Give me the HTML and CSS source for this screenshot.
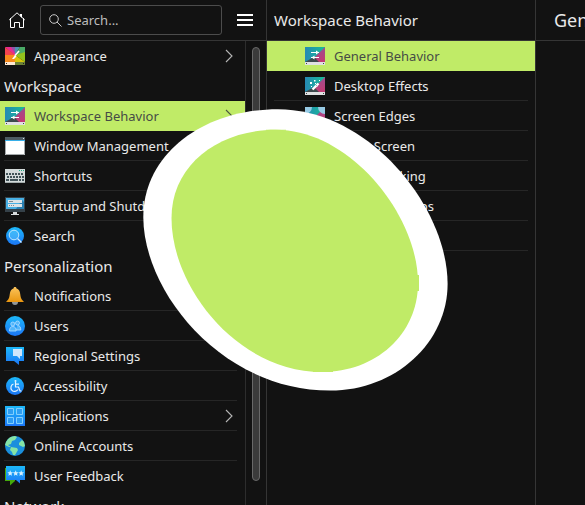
FILE: index.html
```html
<!DOCTYPE html>
<html lang="en">
<head>
<meta charset="utf-8">
<title>System Settings</title>
<link rel="stylesheet" href="styles.css">
</head>
<body>
<svg class="defs" width="0" height="0">
  <defs>
    <linearGradient id="blue" x1="0" y1="0" x2="0" y2="1"><stop offset="0" stop-color="#1cb8f9"/><stop offset="1" stop-color="#1c76f5"/></linearGradient>
    <linearGradient id="gold" x1="0" y1="0" x2="0" y2="1"><stop offset="0" stop-color="#fbc45c"/><stop offset="1" stop-color="#e99610"/></linearGradient>
    <linearGradient id="teal" x1="0" y1="0" x2="1" y2="0"><stop offset="0" stop-color="#2689b4"/><stop offset="1" stop-color="#18bd95"/></linearGradient>
    <linearGradient id="pink" x1="0" y1="0" x2="0" y2="1"><stop offset="0" stop-color="#9c4e91"/><stop offset="1" stop-color="#c43b72"/></linearGradient>
    <symbol id="desk" viewBox="0 0 20 18">
      <path fill="url(#teal)" d="M0 0h20v15H0z"/><path fill="url(#pink)" d="M20 0v15h-7L9 11z"/><path fill="#3d4a4d" d="M0 15l9-5 5 5z"/>
      <path fill="#dfe1e2" d="M0 15h20v3H0z"/><path fill="#444" d="M1 16h1v1H1zM18 16h1v1h-1z"/>
    </symbol>
    <symbol id="sliders" viewBox="0 0 20 18">
      <use href="#desk"/><path fill="none" stroke="#fff" stroke-width="1" d="M6 5.500h8M6 10.500h8"/><path fill="#fff" d="M11 3.500l3 2-3 2zM9.500 8.500l-3 2 3 2z"/>
    </symbol>
  </defs>
</svg>
<div class="window">
  <aside class="sidebar">
    <header class="bar tools">
      <svg class="home" width="16" height="16" viewBox="0 0 16 16"><path fill="none" stroke="#fff" d="M1.500 6v9.500h4V10.500h5v5h4V6M.2 8L8 .8 15.800 8"/><path fill="#fff" d="M6 10h4v1H6zM11 2h2v4l-2-2z"/></svg>
      <div class="search">
        <svg width="13" height="13" viewBox="0 0 13 13"><circle cx="5" cy="5" r="4.300" fill="none" stroke="#c8c8c8"/><path stroke="#c8c8c8" d="M8 8l4.500 4.500"/></svg>
        <span>Search...</span>
      </div>
      <div class="burger"><i></i><i></i><i></i></div>
    </header>
    <div class="body">
      <nav class="list">
        <div class="row"><svg class="icon" viewBox="0 0 20 18"><path fill="#e72a91" d="M0 0h10v9z"/><path fill="#f44350" d="M0 0v9l10-1z"/><path fill="#9152a6" d="M6 0h5v8z"/><path fill="#4f91b1" d="M10 0h5l-5 8z"/><path fill="#4aab67" d="M15 0h5v6L10 8z"/><path fill="#93c31d" d="M20 5v10L10 8z"/><path fill="#d6c609" d="M20 15H9l1-7z"/><path fill="#f88b1c" d="M0 8v7h10V8z"/><path fill="#fde7d2" d="M0 15h10v3H0z"/><path fill="#6b8136" d="M10 15h10v3H10z"/><path fill="#222" d="M1 16h1v1H1zM18 16h1v1h-1z"/><path stroke="#fff" stroke-width="1.600" d="M14 4l-4 4.500"/><path fill="#fff" d="M10 8l1.500 1.500L9 12H7z"/></svg><span>Appearance</span><svg class="chevron" viewBox="0 0 8 14"><path d="M1 1l6 6-6 6"/></svg></div>
        <h2>Workspace</h2>
        <div class="row selected"><svg class="icon"><use href="#sliders"/></svg><span>Workspace Behavior</span><svg class="chevron" viewBox="0 0 8 14"><path d="M1 1l6 6-6 6"/></svg></div>
        <div class="row line"><svg class="icon" viewBox="0 0 20 18"><path fill="#fff" d="M0 0h20v18H0z"/><path fill="#4d5b62" d="M0 0h20v3H0z"/><path fill="#36aee8" d="M0 3h20v1H0z"/><path fill="#dce1e4" d="M18 1h1v1h-1z"/><path fill="none" stroke="#a4a8aa" d="M.5 4v13.500h19V4"/></svg><span>Window Management</span></div>
        <div class="row line"><svg class="icon" viewBox="0 0 20 18"><path fill="#d3dada" d="M0 2h20v14H0z"/><path fill="#a4adad" d="M0 15h20v1H0z"/><path stroke="#415257" stroke-width="2" stroke-dasharray="2 1" d="M1 7h18M2 10h17"/><path stroke="#415257" stroke-width="2" d="M1 13h3M5 13h8M14 13h2M17 13h2"/><path stroke="#21a984" stroke-dasharray="1 1" d="M14 3.500h5"/></svg><span>Shortcuts</span></div>
        <div class="row line"><svg class="icon" viewBox="0 0 20 18"><path fill="#354149" d="M0 0h20v15H0z"/><path fill="#48b0e4" d="M1 1h18v11H1z"/><path fill="#2a7fb0" d="M17 3l2 2v7h-8z"/><path fill="#dce4e7" d="M3 3h14v3H3zM3 7h14v3H3z"/><path fill="#7b8a93" d="M4 4h4v1H4zM4 8h1v1H4zM6 8h1v1H6zM8 8h1v1H8z"/><path fill="#d8dcde" d="M8 15h4v2h2v1H6v-1h2z"/></svg><span>Startup and Shutdown</span></div>
        <div class="row"><svg class="icon" viewBox="0 0 20 18"><circle cx="10" cy="9" r="9" fill="url(#blue)"/><circle cx="9" cy="8" r="4.800" fill="#66c9fb" fill-opacity=".45" stroke="#bde7ff"/><path stroke="#d3eeff" stroke-width="1.200" d="M12.500 11.500l4 4"/></svg><span>Search</span></div>
        <h2>Personalization</h2>
        <div class="row line"><svg class="icon" viewBox="0 0 20 18"><circle cx="10" cy="15" r="3" fill="#92979a"/><path fill="url(#gold)" d="M10 0c1 0 1.500.6 1.500 1.500C15 2.500 15 6 15.500 9c.4 2.600 1.500 4 3.500 6H1c2-2 3.100-3.400 3.500-6C5 6 5 2.500 8.500 1.500 8.500.6 9 0 10 0z"/></svg><span>Notifications</span></div>
        <div class="row line"><svg class="icon big" viewBox="0 0 20 20"><circle cx="10" cy="10" r="10" fill="url(#blue)"/><g fill="#52b6fa" stroke="#b4deff" stroke-width=".8"><circle cx="12.500" cy="7" r="2"/><path d="M10.500 14h5.300c0-3-1-4.500-3.300-4.500"/><circle cx="7.800" cy="8" r="2"/><path d="M4.500 15c0-3 1-4.500 3.300-4.500s3.300 1.500 3.300 4.500z"/></g></svg><span>Users</span></div>
        <div class="row line"><svg class="icon" viewBox="0 0 20 18"><path fill="url(#blue)" d="M1 0h18v14h-5v4l-5-4H1z"/><path fill="#cfe6fb" d="M8 2h9v7h-2v3l-3-3H8z"/></svg><span>Regional Settings</span></div>
        <div class="row line"><svg class="icon" viewBox="0 0 20 18"><circle cx="10" cy="9" r="9" fill="url(#blue)"/><g fill="none" stroke="#e6f4ff" stroke-width="1.200"><path d="M10.500 5v5h3l1.500 4h1.500M10.500 7.200h3.500M8.500 7a3.800 3.800 0 1 0 4.500 5.500"/></g><circle cx="10.500" cy="4" r="1" fill="#e6f4ff"/></svg><span>Accessibility</span></div>
        <div class="row line"><svg class="icon big" viewBox="0 0 20 20"><path fill="url(#blue)" d="M0 0h20v20H0z"/><g fill="#2f9df0" stroke="#83cffd"><path d="M2.500 2.500h6v6h-6zM11.500 2.500h6v6h-6zM2.500 11.500h6v6h-6zM11.500 11.500h6v6h-6z"/></g></svg><span>Applications</span><svg class="chevron" viewBox="0 0 8 14"><path d="M1 1l6 6-6 6"/></svg></div>
        <div class="row line"><svg class="icon big" viewBox="0 0 20 20"><circle cx="10" cy="10" r="10" fill="#1a8fdd"/><path fill="#86e4a5" d="M1 6C3 2 6 0 10 0l2 1-2 3-3 1-1 3-3 1 3 2H4L0 9zM14 7l3-3 2 2 1 4-2 1-4-2zM6 11l6 1 1 2-3 5H8l-1-3-2-2z"/></svg><span>Online Accounts</span></div>
        <div class="row"><svg class="icon big" viewBox="0 0 20 20"><path fill="#45a90b" d="M0 2h10v13l-5 4.500V15H0z"/><path fill="url(#blue)" d="M1 0h19v14h-5v3.500L11 14H1z"/><path fill="#d4efff" d="M5.200 4.300l.8 1.900 2 .1-1.500 1.400.5 2.100-1.800-1.100-1.800 1.100.5-2.100-1.500-1.400 2-.1zM10.700 4.300l.8 1.900 2 .1L12 7.700l.5 2.100-1.800-1.100-1.800 1.100.5-2.100-1.500-1.400 2-.1zM16.200 4.300l.8 1.900 2 .1-1.500 1.400.5 2.100-1.800-1.100-1.800 1.100.5-2.100-1.500-1.400 2-.1z"/></svg><span>User Feedback</span></div>
        <h2>Network</h2>
      </nav>
      <div class="scroll"><div class="thumb"></div></div>
    </div>
  </aside>
  <section class="middle">
    <header class="bar title">Workspace Behavior</header>
    <nav class="sublist">
      <div class="row selected"><svg class="icon"><use href="#sliders"/></svg><span>General Behavior</span></div>
      <div class="row line"><svg class="icon" viewBox="0 0 20 18"><use href="#desk"/><path stroke="#fff" stroke-width="2.400" d="M7.500 12.500l6-6"/><path stroke="#b7a7bd" d="M11 8l2 2"/><path fill="#fff" d="M5 5h2v2H5zM9 3h1.500v1.500H9zM6 9h1v1H6zM10 6h1v1h-1zM14 3h1v1h-1z"/></svg><span>Desktop Effects</span></div>
      <div class="row line"><svg class="icon" viewBox="0 0 20 18"><use href="#desk"/><path fill="#97cae4" d="M0 0h7a7 7 0 0 1-7 7zM20 0h-7a7 7 0 0 0 7 7z"/></svg><span>Screen Edges</span></div>
      <div class="row line"><svg class="icon"><use href="#desk"/></svg><span>Touch Screen</span></div>
      <div class="row line"><svg class="icon"><use href="#desk"/></svg><span>Screen Locking</span></div>
      <div class="row line"><svg class="icon"><use href="#desk"/></svg><span>Virtual Desktops</span></div>
      <div class="row line"><svg class="icon"><use href="#desk"/></svg><span>Activities</span></div>
    </nav>
  </section>
  <main class="page"><header class="bar heading">General Behavior</header></main>
</div>
<svg class="overlay" width="585" height="505" viewBox="0 0 585 505">
  <path fill="#fff" d="M143.300 217C143.300 155 202 109.300 278 109.300C370 109.300 447.600 208 447.600 284C447.600 342 396 390.600 330 390.600C222 390.600 143.300 292 143.300 217z"/>
  <path fill="#c0eb67" d="M171.500 218C171.500 165 218 129.700 276 129.700C350 129.700 418 215 418 283C418 335 375 372 322 372C238 372 171.500 288 171.500 218z"/>
  <path fill="#c0eb67" d="M417 275h2v16h-2zM266 129.700h20v1h-20zM313 371h20v1h-20z"/>
</svg>
</body>
</html>
```
FILE: styles.css
```css
* { box-sizing: border-box; }
body { margin: 0; overflow: hidden; background: #121212; color: #e9e9e9; font: 13px/18px "Noto Sans", sans-serif; }
.defs { position: absolute; }
.window { display: grid; grid-template-columns: 267px 269px 1fr; height: 505px; overflow: hidden; }
.sidebar, .middle { border-right: 1px solid #353535; overflow: hidden; }
.sidebar, .middle { display: flex; flex-direction: column; }
.page { overflow: hidden; }
.bar { flex: none; height: 41px; border-bottom: 1px solid #353535; display: flex; align-items: center; white-space: nowrap; }
.tools { padding-left: 9px; }
.home { margin-right: 15px; }
.search { width: 182px; height: 30px; border: 1px solid #4c4c4c; border-radius: 3px; display: flex; align-items: center; gap: 5px; padding-left: 8px; color: #bdbdbd; }
.burger { width: 16px; margin-left: 15px; display: grid; gap: 3px; }
.burger i { height: 2px; background: #fff; }
.title { padding-left: 7px; font-size: 15px; }
.heading { padding-left: 18px; font-size: 18px; }
.body { display: flex; flex: 1; min-height: 0; }
.list { width: 245px; overflow: hidden; }
.row { height: 30px; display: flex; align-items: center; padding-left: 5px; white-space: nowrap; }
.row span { margin-left: 9px; }
.icon { width: 20px; height: 18px; flex: none; }
.icon.big { height: 20px; }
.chevron { width: 8px; height: 14px; margin: 0 12px 0 auto; fill: none; stroke: #b5b5b5; stroke-width: 1.1; }
.selected { background: #c0eb67; color: #464b46; }
.selected .chevron { stroke: #4a5540; }
.line { background: linear-gradient(#262626, #262626) 4px 29px / 233px 1px no-repeat; }
h2 { margin: 0; height: 30px; padding-left: 4px; font-size: 15px; font-weight: 400; line-height: 31px; }
.scroll { width: 21px; border-left: 1px solid #2d2d2d; padding: 6px 6px 24px; }
.thumb { width: 8px; height: 100%; background: #3b3b3b; border: 1px solid #696969; border-radius: 4px; }
.sublist .row { padding-left: 38px; }
.sublist .line { background-position: 7px 29px; background-size: 254px 1px; }
.overlay { position: absolute; left: 0; top: 0; }
```
